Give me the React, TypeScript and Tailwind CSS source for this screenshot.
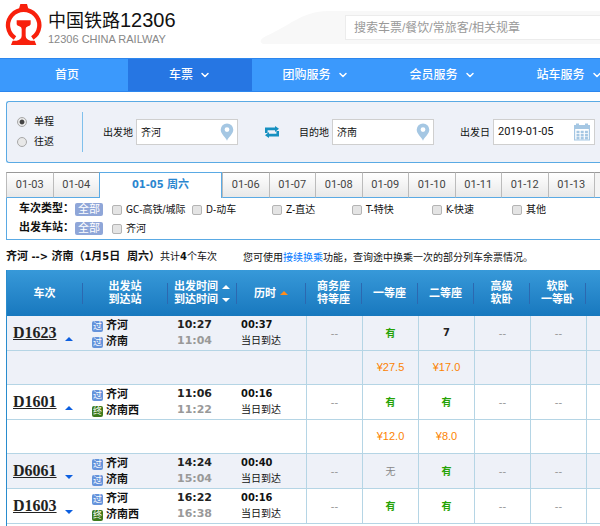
import { ChevronDown } from 'lucide-react';

const navItems = ['团购服务', '会员服务', '站车服务'];

const dates = ['01-03', '01-04', '01-05', '01-06', '01-07', '01-08', '01-09', '01-10', '01-11', '01-12', '01-13'];

const trainTypes = ['GC-高铁/城际', 'D-动车', 'Z-直达', 'T-特快', 'K-快速', '其他'];

const seatColumns = [['商务座', '特等座'], ['一等座'], ['二等座'], ['高级', '软卧'], ['软卧', '一等卧']];

const trains = [
  {
    no: 'D1623',
    from: '齐河',
    to: '济南',
    terminal: false,
    depart: '10:27',
    arrive: '11:04',
    duration: '00:37',
    seats: ['--', '有', '7', '--', '--'],
    prices: ['', '¥27.5', '¥17.0', '', ''],
  },
  {
    no: 'D1601',
    from: '齐河',
    to: '济南西',
    terminal: true,
    depart: '11:06',
    arrive: '11:22',
    duration: '00:16',
    seats: ['--', '有', '有', '--', '--'],
    prices: ['', '¥12.0', '¥8.0', '', ''],
  },
  {
    no: 'D6061',
    from: '齐河',
    to: '济南',
    terminal: false,
    depart: '14:24',
    arrive: '15:04',
    duration: '00:40',
    seats: ['--', '无', '有', '--', '--'],
    prices: null,
  },
  {
    no: 'D1603',
    from: '齐河',
    to: '济南西',
    terminal: true,
    depart: '16:22',
    arrive: '16:38',
    duration: '00:16',
    seats: ['--', '有', '有', '--', '--'],
    prices: null,
  },
];

function Logo() {
  return (
    <svg viewBox="15 9 114 129" className="w-[38px] h-[43px] shrink-0" aria-hidden="true">
      <path d="M45 114A47 46 0 1 1 97 114" fill="none" stroke="#f8200c" strokeWidth="13" />
      <path
        d="M57 26L61 12H81L85 26ZM50 61H92V73Q91 78 84 79Q77 81 77 87V108Q78 119 92 122H104L109 135H33L38 122H50Q64 119 65 108V87Q65 81 58 79Q51 78 50 73Z"
        fill="#f8200c"
      />
    </svg>
  );
}

function PinIcon() {
  return (
    <svg viewBox="0 0 14 18" className="w-[14px] h-[18px] shrink-0" aria-hidden="true">
      <path
        fillRule="evenodd"
        fill="#a5c7e3"
        d="M7 0.5a6.3 6.3 0 0 1 6.3 6.3C13.3 11 8.5 14 7 17.7C5.5 14 .7 11 .7 6.8A6.3 6.3 0 0 1 7 .5ZM7 4.2a2.4 2.4 0 1 0 0 4.8a2.4 2.4 0 0 0 0-4.8Z"
      />
    </svg>
  );
}

function CalendarIcon() {
  return (
    <svg viewBox="0 0 18 18" className="w-[18px] h-[18px] shrink-0" aria-hidden="true">
      <path fill="#a5c7e3" d="M1 2h2V0.5h3V2h6V0.5h3V2h2v4H1Z" />
      <path fill="none" stroke="#a5c7e3" strokeWidth="1.2" d="M1.6 5.5V17h14.8V5.5" />
      <path stroke="#a5c7e3" strokeWidth="2.4" strokeDasharray="3 1.2" d="M3.5 9h11.6M3.5 12.3h11.6M3.5 15.3h11.6" />
    </svg>
  );
}

function SwapIcon() {
  return (
    <svg viewBox="0 0 14 12" className="w-[14px] h-3" aria-hidden="true">
      <path fill="#1690c0" d="M0 7V1.5h10V0L14 2.8L10 6V4.3H2.6V7ZM14 5v5.5H4V12L0 9.2L4 6v1.7h7.4V5Z" />
    </svg>
  );
}

function Triangle({ up, className }: { up: boolean; className: string }) {
  return (
    <svg viewBox="0 0 8 4" className={`w-2 h-1 ${className}`} fill="currentColor" aria-hidden="true">
      <path d={up ? 'M0 4L4 0L8 4Z' : 'M0 0H8L4 4Z'} />
    </svg>
  );
}

function Field({ id, label, value, date }: { id: string; label: string; value: string; date?: boolean }) {
  return (
    <div className="flex items-center gap-[3px] shrink-0">
      <label htmlFor={id} className="whitespace-nowrap">
        {label}
      </label>
      <div className="flex items-center w-[102px] h-[26px] pl-1 pr-[3px] bg-white border border-[#cfcfcf]">
        <input
          id={id}
          defaultValue={value}
          className={`min-w-0 flex-1 outline-none ${date ? "text-[11px] font-['Roboto',sans-serif]" : ''}`}
        />
        {date ? <CalendarIcon /> : <PinIcon />}
      </div>
    </div>
  );
}

function TripRadio({ label, checked }: { label: string; checked?: boolean }) {
  return (
    <label className="flex items-center gap-[7px] leading-[20px]">
      <input
        type="radio"
        name="trip"
        defaultChecked={checked}
        className="appearance-none w-[10px] h-[10px] rounded-full border border-[#a8a8a8] bg-[#e8e8e8] checked:bg-[radial-gradient(#444_35%,#e8e8e8_50%)]"
      />
      {label}
    </label>
  );
}

function CheckOption({ label }: { label: string }) {
  return (
    <label className="flex items-center gap-1 whitespace-nowrap">
      <input
        type="checkbox"
        className="appearance-none w-[10px] h-[10px] rounded-[2px] border border-[#b4b4b4] bg-[#e4e4e4] shrink-0"
      />
      {label}
    </label>
  );
}

function FilterRow({ title, options }: { title: string; options: string[] }) {
  return (
    <div className="flex items-center h-[19px]">
      <span className="w-14 shrink-0 text-[11px] font-bold whitespace-nowrap">{title}</span>
      <button className="w-7 h-[13px] shrink-0 rounded-[2px] bg-[#8fa6d8] text-white text-[11px] leading-[13px]">
        全部
      </button>
      <div className="ml-[9px] grid grid-cols-[repeat(6,80px)]">
        {options.map((o) => (
          <CheckOption key={o} label={o} />
        ))}
      </div>
    </div>
  );
}

function Station({ name, terminal }: { name: string; terminal: boolean }) {
  return (
    <div className="flex items-center gap-[3px] h-4">
      <span
        className={`w-[11px] h-[11px] rounded-[2px] text-white text-[9px] leading-[11px] text-center ${terminal ? 'bg-[#3d7a1c]' : 'bg-[#6593db]'}`}
      >
        {terminal ? '终' : '过'}
      </span>
      <span className="text-[11px] font-bold">{name}</span>
    </div>
  );
}

function HeadCell({ children }: { children: React.ReactNode }) {
  return (
    <th scope="col" className="p-0 font-bold">
      <div className="flex items-center justify-center gap-1 h-[21px] leading-[13px] whitespace-nowrap border-r border-[#2c68b0]">
        {children}
      </div>
    </th>
  );
}

function seatStyle(seat: string) {
  if (seat === '有') return 'text-[#26a306] font-bold text-[10px]';
  if (seat === '无') return 'text-[#888] text-[10px]';
  if (seat === '--') return "text-[#999] text-[11px] font-['Liberation_Sans',sans-serif]";
  return 'text-[#222] font-bold text-[11px]';
}

function TrainRows({ train, shaded }: { train: (typeof trains)[number]; shaded: boolean }) {
  const bg = shaded ? 'bg-[#eef1f8]' : 'bg-white';
  const cell = 'p-0 border-b border-[#b5d5e5]';
  const seatCell = `${cell} border-l text-center`;
  return (
    <>
      <tr className={`h-[35px] ${bg}`}>
        <td className={cell}>
          <div className="flex items-center gap-2 pl-[6px]">
            <a href="#" className="font-['Liberation_Serif',serif] text-[16px] font-bold text-[#222] underline">
              {train.no}
            </a>
            <button aria-label={train.prices ? '收起票价' : '展开票价'} className="pt-3">
              <Triangle up={train.prices !== null} className="text-[#0c5fe0]" />
            </button>
          </div>
        </td>
        <td className={`${cell} pl-[9px] pt-[2px]`}>
          <Station name={train.from} terminal={false} />
          <Station name={train.to} terminal={train.terminal} />
        </td>
        <td className={`${cell} pl-[9px] font-['DejaVu_Sans',sans-serif] font-bold text-[11px] leading-[16px]`}>
          <p className="text-[#222]">{train.depart}</p>
          <p className="text-[#999]">{train.arrive}</p>
        </td>
        <td className={`${cell} pl-1 leading-[16px]`}>
          <p className="text-[11px] font-bold">{train.duration}</p>
          <p>当日到达</p>
        </td>
        {train.seats.map((seat, i) => (
          <td key={i} className={seatCell}>
            <span className={seatStyle(seat)}>{seat}</span>
          </td>
        ))}
        <td className={seatCell} />
      </tr>
      {train.prices && (
        <tr className={`h-[34px] ${bg}`}>
          <td colSpan={4} className={cell} />
          {train.prices.map((price, i) => (
            <td key={i} className={`${seatCell} text-[11px] text-[#fc8302] font-['Liberation_Sans',sans-serif]`}>
              {price}
            </td>
          ))}
          <td className={seatCell} />
        </tr>
      )}
    </>
  );
}

export default function App() {
  return (
    <div className="overflow-hidden bg-white text-[10px] text-[#111] font-['DejaVu_Sans_Condensed','Noto_Sans_CJK_SC',sans-serif]">
      {/* Header */}
      <header className="flex items-start justify-between h-[58px] pl-[5px] pt-[3px]">
        <a href="#" className="flex items-start gap-[5px] whitespace-nowrap font-['Liberation_Sans','Noto_Sans_CJK_SC',sans-serif]">
          <Logo />
          <span className="pt-[6px]">
            <span className="block text-[20px] leading-[22px]">
              <span className="text-[18px]">中国铁路</span>12306
            </span>
            <span className="block text-[11px] leading-[14px] text-[#888]">12306 CHINA RAILWAY</span>
          </span>
        </a>
        <div className="flex mt-2">
          <svg viewBox="0 0 85 33" className="w-[85px] h-[33px]" aria-hidden="true">
            <path d="M85 0H68C42 0 28 16 6 25Q-3 30 3 33H85Z" fill="#f8f8f8" />
          </svg>
          <div className="w-[255px] py-1 bg-[#f8f8f8]">
            <input
              type="search"
              aria-label="搜索"
              placeholder="搜索车票/餐饮/常旅客/相关规章"
              className="block w-full h-[25px] pl-2 bg-white border border-r-0 border-[#ececec] text-[12px] placeholder:text-[#999] outline-none font-['Liberation_Sans','Noto_Sans_CJK_SC',sans-serif]"
            />
          </div>
        </div>
      </header>

      {/* Main nav */}
      <nav className="flex h-[34px] overflow-hidden bg-[#3b99fc] border-y border-[#2c86ee] text-[12px] font-medium text-white">
        <a href="#" className="flex items-center justify-center w-32 shrink-0 pl-[6px]">
          首页
        </a>
        <a href="#" className="flex items-center justify-center gap-[6px] w-[124px] shrink-0 bg-[#2676e3]">
          车票
          <ChevronDown className="w-3 h-3" strokeWidth={3} />
        </a>
        {navItems.map((item) => (
          <a key={item} href="#" className="flex items-center justify-center gap-[6px] w-[127px] shrink-0">
            {item}
            <ChevronDown className="w-3 h-3" strokeWidth={3} />
          </a>
        ))}
      </nav>

      <main className="pl-[6px]">
        {/* Search form */}
        <form className="flex items-center mt-[9px] py-[10px] pl-[10px] bg-[#eef1f8] border border-r-0 border-[#5aaae4] rounded-l-[3px]">
          <div className="w-[66px] shrink-0 border-r border-[#7fc0ec]">
            <TripRadio label="单程" checked />
            <TripRadio label="往返" />
          </div>
          <div className="flex items-center pl-5">
            <Field id="from" label="出发地" value="齐河" />
            <button type="button" aria-label="交换出发地和目的地" className="ml-[27px] mr-5 shrink-0">
              <SwapIcon />
            </button>
            <div className="flex gap-[26px]">
              <Field id="to" label="目的地" value="济南" />
              <Field id="date" label="出发日" value="2019-01-05" date />
            </div>
          </div>
        </form>

        {/* Date tabs */}
        <div className="flex mt-[9px]">
          {dates.map((d) =>
            d === '01-05' ? (
              <button
                key={d}
                className="w-[123px] h-[26px] shrink-0 border-t border-x border-[#5aaae4] text-[11px] font-bold text-[#2a86cf]"
              >
                {d} 周六
              </button>
            ) : (
              <button
                key={d}
                className="flex-1 h-[26px] border-t border-l border-t-[#999] border-l-[#bbb] border-b border-b-[#5aaae4] bg-linear-to-b from-white to-[#e8e8e8] text-[11px] text-[#444] font-['Roboto',sans-serif]"
              >
                {d}
              </button>
            ),
          )}
          <div className="w-[6px] border-t border-l border-t-[#999] border-l-[#bbb] border-b border-b-[#5aaae4] bg-[#f4f4f4]" />
        </div>

        {/* Filters */}
        <div className="pt-[2px] pb-[1px] pl-3 border-l border-b border-[#5aaae4]">
          <FilterRow title="车次类型：" options={trainTypes} />
          <FilterRow title="出发车站：" options={['齐河']} />
        </div>

        {/* Summary */}
        <div className="flex items-center gap-[26px] h-[30px] pt-1 whitespace-nowrap">
          <p>
            <strong className="text-[11px] whitespace-pre">{'齐河 --> 济南（1月5日  周六）'}</strong>
            共计<strong className="text-[11px]">4</strong>个车次
          </p>
          <p>
            您可使用
            <a href="#" className="text-[#0077ff]">
              接续换乘
            </a>
            功能，查询途中换乘一次的部分列车余票情况。
          </p>
        </div>

        {/* Train list */}
        <div className="pb-[2px] border-l border-[#298cce]">
          <table className="w-full table-fixed border-separate border-spacing-0">
            <colgroup>
              <col className="w-[76px]" />
              <col className="w-[85px]" />
              <col className="w-[69px]" />
              <col className="w-[69px]" />
              <col className="w-[56px]" />
              <col className="w-[56px]" />
              <col className="w-[56px]" />
              <col className="w-[56px]" />
              <col className="w-[56px]" />
              <col />
            </colgroup>
            <thead className="text-[11px] text-white">
              <tr className="h-[46px] bg-linear-to-b from-[#3799d9] to-[#1778be]">
                <HeadCell>车次</HeadCell>
                <HeadCell>
                  <span>
                    出发站
                    <br />
                    到达站
                  </span>
                </HeadCell>
                <HeadCell>
                  <span>
                    <button className="flex items-center gap-1">
                      出发时间
                      <Triangle up className="text-white" />
                    </button>
                    <button className="flex items-center gap-1">
                      到达时间
                      <Triangle up={false} className="text-white" />
                    </button>
                  </span>
                </HeadCell>
                <HeadCell>
                  <button className="flex items-center gap-1">
                    历时
                    <Triangle up className="text-[#ff8c1a]" />
                  </button>
                </HeadCell>
                {seatColumns.map((lines) => (
                  <HeadCell key={lines.join('')}>
                    <span>
                      {lines.map((line) => (
                        <span key={line} className="block">
                          {line}
                        </span>
                      ))}
                    </span>
                  </HeadCell>
                ))}
                <td />
              </tr>
            </thead>
            <tbody>
              {trains.map((t, i) => (
                <TrainRows key={t.no} train={t} shaded={i % 2 === 0} />
              ))}
            </tbody>
          </table>
        </div>
      </main>
    </div>
  );
}
